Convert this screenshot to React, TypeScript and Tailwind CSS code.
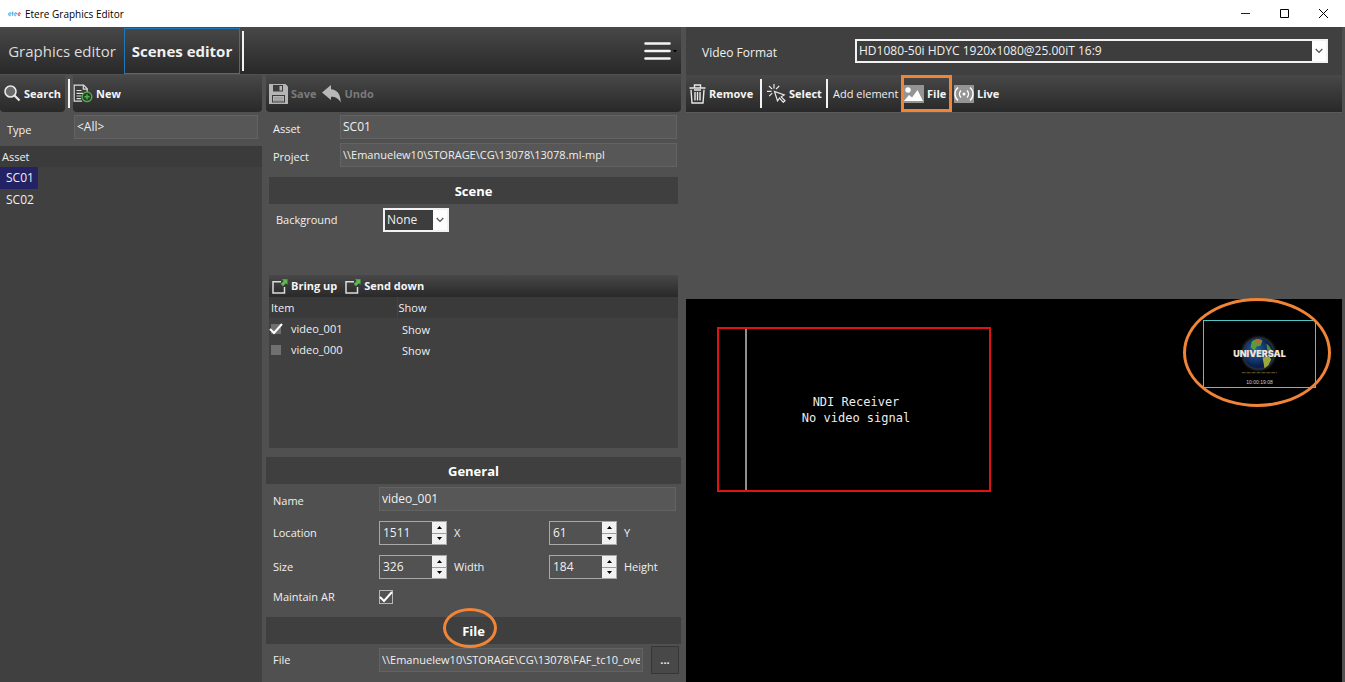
import { useState } from 'react'
import type { ReactNode } from 'react'
import clsx from 'clsx'

const TOOLBAR = 'bg-linear-to-b from-[#484848] to-[#292929]'
const FIELD =
  'h-6 min-w-0 border border-[#636363] bg-[#575757] px-0.5 pb-0.5 text-[#f0f0f0] outline-none'

function Divider() {
  return <div className="mx-[3px] h-[29px] w-0.5 shrink-0 bg-[#f2f2f2]" />
}

function Chevron() {
  return (
    <svg width="8" height="6" viewBox="0 0 8 6" fill="none" stroke="#555" strokeWidth="1.3">
      <path d="M0.7 1 4 4.4 7.3 1" />
    </svg>
  )
}

function ToolButton({
  icon,
  label,
  disabled,
  className
}: {
  icon: ReactNode
  label: string
  disabled?: boolean
  className?: string
}) {
  return (
    <button
      type="button"
      disabled={disabled}
      className={clsx(
        'flex h-full shrink-0 items-center gap-[3px] font-bold whitespace-nowrap',
        disabled ? 'text-[#7b7b7b]' : 'text-[#f4f4f4]',
        className
      )}
    >
      {icon}
      {label}
    </button>
  )
}

function SelectBox({ id, options, className }: { id: string; options: string[]; className: string }) {
  return (
    <div className={clsx('flex h-6 border-2 border-[#f2f2f2] bg-[#3d3d3d]', className)}>
      <div className="relative flex flex-1">
        <select
          id={id}
          className="w-full appearance-none bg-transparent pr-4 pl-0.5 text-xs leading-4 text-[#f0f0f0] outline-none"
        >
          {options.map((option) => (
            <option key={option}>{option}</option>
          ))}
        </select>
        <span className="pointer-events-none absolute inset-y-0 right-0 flex w-[14px] items-center justify-center bg-white">
          <Chevron />
        </span>
      </div>
    </div>
  )
}

function SectionTitle({ children, className }: { children: ReactNode; className?: string }) {
  return (
    <h2
      className={clsx(
        'flex h-[27px] items-center justify-center bg-[#3f3f3f] text-[13px] font-bold text-white',
        className
      )}
    >
      {children}
    </h2>
  )
}

function NumberField({ id, label, initial }: { id: string; label: string; initial: number }) {
  const [value, setValue] = useState(initial)
  return (
    <div className="flex items-center gap-[7px]">
      <div className="flex h-6 w-[68px] shrink-0 border border-[#a8a8a8] bg-[#525252]">
        <input
          id={id}
          type="number"
          value={value}
          onChange={(e) => setValue(+e.target.value)}
          className="min-w-0 flex-1 appearance-none bg-transparent pl-[3px] text-xs text-[#f0f0f0] outline-none [appearance:textfield] [&::-webkit-inner-spin-button]:appearance-none"
        />
        <div className="flex w-[14px] flex-col gap-px bg-[#9a9a9a]">
          <button
            type="button"
            aria-label={`Increase ${label}`}
            onClick={() => setValue(value + 1)}
            className="flex flex-1 items-center justify-center bg-[#f1f1f1]"
          >
            <svg width="5" height="3" viewBox="0 0 5 3">
              <path d="M0 3 2.5 0 5 3z" />
            </svg>
          </button>
          <button
            type="button"
            aria-label={`Decrease ${label}`}
            onClick={() => setValue(value - 1)}
            className="flex flex-1 items-center justify-center bg-[#f1f1f1]"
          >
            <svg width="5" height="3" viewBox="0 0 5 3">
              <path d="M0 0h5L2.5 3z" />
            </svg>
          </button>
        </div>
      </div>
      <label htmlFor={id}>{label}</label>
    </div>
  )
}

function CheckBox({ id, initial, bordered }: { id: string; initial: boolean; bordered?: boolean }) {
  const [checked, setChecked] = useState(initial)
  return (
    <span className="relative block size-3.5">
      <input
        id={id}
        type="checkbox"
        checked={checked}
        onChange={() => setChecked(!checked)}
        className={clsx(
          'block size-full appearance-none',
          bordered ? 'border border-[#b5b5b5] bg-[#525252]' : 'border-2 border-[#404040] bg-[#707070]'
        )}
      />
      {checked && (
        <svg
          className="pointer-events-none absolute inset-0"
          width="14"
          height="14"
          viewBox="0 0 14 14"
          fill="none"
          stroke="#fff"
          strokeWidth="2"
        >
          <path d="M1 7 5 11 13 2" />
        </svg>
      )}
    </span>
  )
}

function SearchIcon() {
  return (
    <svg width="17" height="17" viewBox="0 0 17 17" fill="none" stroke="#e8e8e8">
      <circle cx="6.5" cy="6.5" r="5.5" fill="#6a6a6a" strokeWidth="1.6" />
      <path d="m10.5 10.5 5 5" strokeWidth="2.2" />
    </svg>
  )
}

function NewIcon() {
  return (
    <svg width="20" height="19" viewBox="0 0 20 19" fill="none" stroke="#dedede" strokeWidth="1.2">
      <path d="M9 17.2H1.2V1.2h9.5l3.5 3.6V8" />
      <path d="M10.3 1.2v4h4M3.5 6.5h5M3.5 9.3h7M3.5 12h5M3.5 14.7h4.5" />
      <circle cx="14" cy="12.8" r="4.8" fill="#303a30" stroke="#4fae4b" strokeWidth="1.4" />
      <path d="M14 10.2v5.2M11.4 12.8h5.2" stroke="#4fae4b" strokeWidth="1.4" />
    </svg>
  )
}

function SaveIcon() {
  return (
    <svg width="19" height="20" viewBox="0 0 19 20">
      <path d="M0 0h16.5L19 2.5V20H0z" fill="#b5b5b5" />
      <path d="M4 1h10v6.5H4zM3 11h13v7.5H3z" fill="#3c3c3c" />
      <path d="M10.5 2H13v4.5h-2.5zM4 12h11v5.5H4z" fill="#b5b5b5" />
      <path d="M5 13.5h9v1H5zM5 15.7h9v1H5z" fill="#8a8a8a" />
    </svg>
  )
}

function UndoIcon() {
  return (
    <svg width="19" height="18" viewBox="0 0 19 18" fill="#b8b8b8">
      <path d="M0 7.5 9 0v4.3c5.500.3 9.500 4 9.800 13.200-2.300-4-5-5.600-9.800-5.700V15z" />
    </svg>
  )
}

function MoveIcon() {
  return (
    <svg width="16" height="15" viewBox="0 0 16 15" fill="none">
      <path d="M9 2.7H1V14h11.5V8" stroke="#dcdcdc" strokeWidth="1.5" />
      <path d="M15.500.2v5.600L13.900 4.300 11 7.200 8.800 5 11.700 2.100 10 .2z" fill="#5bb94f" />
    </svg>
  )
}

function TrashIcon() {
  return (
    <svg width="17" height="20" viewBox="0 0 17 20" fill="none" stroke="#e8e8e8" strokeWidth="1.4">
      <path d="M.5 4h16M5.500 3.800V1h6v2.800M2 5.800 3 19h11l1-13.200M5 6h7" />
      <path d="M6 8v8.500M8.500 8v8.500M11 8v8.500" />
    </svg>
  )
}

function SelectIcon() {
  return (
    <svg width="19" height="19" viewBox="0 0 19 19" fill="none" stroke="#e8e8e8" strokeWidth="1.2">
      <path d="M7 0v4.500M2 2l3.200 3.200M0 7.300h4.500M2.200 12.200l3-3M12.200 2 9 5.200" />
      <path d="m7.500 7.500 3 9.500 2-3 3.800 4.300 1.700-1.500-3.800-4 3-1.900z" />
    </svg>
  )
}

function ImageIcon() {
  return (
    <svg width="20" height="18" viewBox="0 0 20 18">
      <path fill="#949494" d="M0 0h20v18H0z" />
      <circle cx="4" cy="5" r="2.7" fill="#fff" />
      <path d="M0 16 5 10l3 2.500L13.500 5 19 16z" fill="#fff" />
    </svg>
  )
}

function LiveIcon() {
  return (
    <svg width="20" height="18" viewBox="0 0 20 18" fill="none" stroke="#fff" strokeWidth="1.4">
      <path fill="#949494" stroke="none" d="M0 0h20v18H0z" />
      <circle cx="10" cy="9" r="1.5" fill="#fff" stroke="none" />
      <path d="M7 5.500a5 5 0 0 0 0 7M13 5.500a5 5 0 0 1 0 7M4 2.500a8.500 8.500 0 0 0 0 13M16 2.500a8.500 8.500 0 0 1 0 13" />
    </svg>
  )
}

function TitleBar() {
  return (
    <header className="flex h-[27px] shrink-0 items-center bg-white pr-0.5 pl-2 text-[10px] text-black">
      <svg className="mr-1" width="13" height="6" viewBox="0 0 13 6" fill="none" strokeWidth="1">
        <path
          d="M.6 3h2.600a1.300 1.600 0 1 0-.4 1.400M4.600.5v4.300M3.800 2h1.800M6.600 3h2a1.200 1.600 0 1 0-.4 1.400"
          stroke="#53aee8"
        />
        <path d="M10 3h2.400a1.200 1.600 0 1 0-.4 1.400" stroke="#e8505b" />
      </svg>
      <h1 className="flex-1">Etere Graphics Editor</h1>
      <div className="flex h-full">
        <button type="button" aria-label="Minimize" className="flex w-[39px] items-center justify-center">
          <svg width="9" height="9" viewBox="0 0 9 9" stroke="#222">
            <path d="M0 4.500h9" />
          </svg>
        </button>
        <button type="button" aria-label="Maximize" className="flex w-[39px] items-center justify-center">
          <svg width="9" height="9" viewBox="0 0 9 9" fill="none" stroke="#000">
            <path d="M.5.5h8v8h-8z" />
          </svg>
        </button>
        <button type="button" aria-label="Close" className="flex w-[39px] items-center justify-center">
          <svg width="9" height="9" viewBox="0 0 9 9" stroke="#000">
            <path d="m0 0 9 9M9 0 0 9" />
          </svg>
        </button>
      </div>
    </header>
  )
}

function AssetList() {
  const [selected, setSelected] = useState('SC01')
  return (
    <aside className="flex w-[262px] shrink-0 flex-col">
      <div className="flex h-[37px]">
        <div className={clsx('flex w-[65px] rounded-b-sm', TOOLBAR)}>
          <ToolButton icon={<SearchIcon />} label="Search" className="pl-1" />
        </div>
        <div className="flex items-center">
          <Divider />
        </div>
        <div className={clsx('flex flex-1 rounded-b-sm', TOOLBAR)}>
          <ToolButton icon={<NewIcon />} label="New" />
        </div>
      </div>
      <div className="flex h-[34px] items-start pt-[3px] pr-1 pl-[7px]">
        <label htmlFor="type" className="w-[67px] pt-[7px]">
          Type
        </label>
        <input id="type" className={clsx('flex-1 text-xs', FIELD)} defaultValue="<All>" />
      </div>
      <div className="flex-1 bg-[#404040]">
        <div className="flex h-[21px] items-center bg-[#3b3b3b] pl-0.5">Asset</div>
        {['SC01', 'SC02'].map((asset) => (
          <button
            key={asset}
            type="button"
            onClick={() => setSelected(asset)}
            className={clsx(
              'flex h-[22px] w-[38px] items-center pl-[6px] text-xs',
              selected === asset && 'bg-[#232264]'
            )}
          >
            {asset}
          </button>
        ))}
      </div>
    </aside>
  )
}

const ITEMS = [
  { name: 'video_001', checked: true },
  { name: 'video_000', checked: false }
]

function SceneDetails() {
  return (
    <section className="flex min-w-0 flex-1 flex-col">
      <div className={clsx('flex h-[37px] shrink-0 gap-1.5 rounded-b-sm pl-[3px]', TOOLBAR)}>
        <ToolButton icon={<SaveIcon />} label="Save" disabled />
        <ToolButton icon={<UndoIcon />} label="Undo" disabled />
      </div>
      <div className="mt-[3px] flex flex-col gap-1 pr-1 pl-[7px]">
        <div className="flex items-center">
          <label htmlFor="asset" className="w-[67px] pt-1">
            Asset
          </label>
          <input id="asset" className={clsx('flex-1 text-xs', FIELD)} defaultValue="SC01" />
        </div>
        <div className="flex items-center">
          <label htmlFor="project" className="w-[67px] pt-1">
            Project
          </label>
          <input
            id="project"
            className={clsx('flex-1', FIELD)}
            defaultValue={'\\\\Emanuelew10\\STORAGE\\CG\\13078\\13078.ml-mpl'}
          />
        </div>
      </div>

      <div className="mt-[10px] mr-[3px] ml-[3px]">
        <SectionTitle>Scene</SectionTitle>
        <div className="mt-1 flex items-center pl-[7px]">
          <label htmlFor="background" className="w-[107px]">
            Background
          </label>
          <SelectBox id="background" options={['None']} className="w-[66px]" />
        </div>
        <div className={clsx('mt-[43px] flex h-[22px] gap-2 pl-[3px]', TOOLBAR)}>
          <ToolButton icon={<MoveIcon />} label="Bring up" />
          <ToolButton icon={<MoveIcon />} label="Send down" />
        </div>
        <div className="h-[151px] bg-[#404040]">
          <table className="w-full table-fixed text-left">
            <thead className="bg-[#3a3a3a]">
              <tr className="h-[21px]">
                <th className="w-[128px] pl-0.5 font-normal">Item</th>
                <th className="border-l border-[#444] pl-px font-normal">Show</th>
              </tr>
            </thead>
            <tbody>
              {ITEMS.map((item) => (
                <tr key={item.name} className="h-[21px]">
                  <td>
                    <div className="flex items-center gap-2">
                      <CheckBox id={item.name} initial={item.checked} />
                      <label htmlFor={item.name}>{item.name}</label>
                    </div>
                  </td>
                  <td className="pt-0.5 pl-[5px]">Show</td>
                </tr>
              ))}
            </tbody>
          </table>
        </div>
      </div>

      <SectionTitle className="mt-[9px]">General</SectionTitle>
      <div className="mt-[3px] flex flex-col gap-[10px] pr-[5px] pl-[7px]">
        <div className="flex items-center">
          <label htmlFor="name" className="w-[106px] pt-1">
            Name
          </label>
          <input id="name" className={clsx('flex-1 text-xs', FIELD)} defaultValue="video_001" />
        </div>
        <div className="grid grid-cols-[106px_170px_auto] items-center">
          <span>Location</span>
          <NumberField id="location-x" label="X" initial={1511} />
          <NumberField id="location-y" label="Y" initial={61} />
        </div>
        <div className="grid grid-cols-[106px_170px_auto] items-center">
          <span>Size</span>
          <NumberField id="size-width" label="Width" initial={326} />
          <NumberField id="size-height" label="Height" initial={184} />
        </div>
        <div className="flex items-center">
          <label htmlFor="maintain-ar" className="w-[106px]">
            Maintain AR
          </label>
          <CheckBox id="maintain-ar" initial bordered />
        </div>
      </div>

      <SectionTitle className="mt-3">
        <span className="relative">
          File
          <span className="pointer-events-none absolute -top-[15px] -left-[19px] h-10 w-[54px] rounded-[50%] border-3 border-[#f08437]" />
        </span>
      </SectionTitle>
      <div className="mt-0.5 flex items-center pr-0.5 pl-[7px]">
        <label htmlFor="file" className="w-[106px]">
          File
        </label>
        <input
          id="file"
          className={clsx('mr-2 flex-1', FIELD)}
          defaultValue={'\\\\Emanuelew10\\STORAGE\\CG\\13078\\FAF_tc10_overlay.mov'}
        />
        <button
          type="button"
          aria-label="Browse file"
          className="h-7 w-7 shrink-0 border border-[#363636] bg-[#484848] font-bold"
        >
          ...
        </button>
      </div>
    </section>
  )
}

function Globe() {
  return (
    <svg className="absolute inset-0 size-full" viewBox="0 0 112 67">
      <defs>
        <radialGradient id="halo">
          <stop offset="70%" stopColor="#8a8fa0" stopOpacity="0.7" />
          <stop offset="100%" stopColor="#000" stopOpacity="0" />
        </radialGradient>
        <radialGradient id="ocean" cx="40%" cy="40%">
          <stop offset="0%" stopColor="#2566ab" />
          <stop offset="100%" stopColor="#0a1f4c" />
        </radialGradient>
      </defs>
      <circle cx="55" cy="33" r="20" fill="url(#halo)" />
      <circle cx="55" cy="33" r="15.5" fill="url(#ocean)" />
      <path d="M48 21c3-3 9-3 11-1l-2 5-4 1-2 4-4-3z" fill="#5c9a3c" />
      <path d="M52 19c2-1 5 0 6 2l-4 3z" fill="#c2652e" />
      <path d="m59 37 7-1 2 3-3 6-4 3-1-6z" fill="#9aa83a" />
      <path d="M63 23c2 1 5 5 6 8l-5-1z" fill="#4f8b3e" />
      <path d="M38 52.500h36" stroke="#6b5a2c" strokeDasharray="4 1" />
    </svg>
  )
}

function Canvas() {
  return (
    <div className="relative flex-1 bg-black">
      <div className="absolute top-[28px] left-[31px] flex h-[165px] w-[274px] items-center justify-center border-2 border-[#e01212]">
        <div className="absolute inset-y-0 left-[26px] w-0.5 bg-[#8f8f8f]" />
        <p className="pl-1 text-center font-['DejaVu_Sans_Mono',monospace] text-xs leading-4 text-[#ececec]">
          NDI Receiver
          <br />
          No video signal
        </p>
      </div>
      <div className="absolute top-[21px] left-[517px] h-[68px] w-[113px] border border-[#4fc7c9]">
        <Globe />
        <span className="absolute inset-x-0 top-[25px] text-center font-['Inter',sans-serif] text-[9px] leading-4 font-black text-[#f1e4d2]">
          UNIVERSAL
        </span>
        <span className="absolute inset-x-0 top-[57px] text-center font-['Liberation_Sans',sans-serif] text-[5px] leading-2 text-[#d0d0d0]">
          10:00:19:08
        </span>
      </div>
      <div className="pointer-events-none absolute -top-px left-[497px] h-[109px] w-[148px] rounded-[50%] border-3 border-[#f08437]" />
    </div>
  )
}

function Preview() {
  return (
    <section className="mr-[3px] flex min-w-0 flex-1 flex-col">
      <div className="flex h-12 shrink-0 items-center bg-[#404040] pr-[14px] pl-4">
        <label htmlFor="video-format" className="w-[153px] shrink-0 pt-[3px] text-xs">
          Video Format
        </label>
        <SelectBox
          id="video-format"
          options={['HD1080-50i HDYC 1920x1080@25.00iT 16:9']}
          className="flex-1"
        />
      </div>
      <div className={clsx('flex h-[37px] shrink-0 items-center', TOOLBAR)}>
        <ToolButton icon={<TrashIcon />} label="Remove" className="w-[71px] pl-[3px]" />
        <Divider />
        <ToolButton icon={<SelectIcon />} label="Select" className="w-[58px] pl-0.5" />
        <Divider />
        <span className="w-[70px] shrink-0 pl-0.5">Add element</span>
        <ToolButton
          icon={<ImageIcon />}
          label="File"
          className="w-[51px] border-3 border-[#f08437]"
        />
        <ToolButton icon={<LiveIcon />} label="Live" className="ml-0.5" />
      </div>
      <div className="h-[187px] shrink-0 border-t border-[#5c5c5c]" />
      <Canvas />
    </section>
  )
}

export default function App() {
  return (
    <div className="flex min-h-screen flex-col bg-[#505050] font-['Open_Sans','Noto_Sans',sans-serif] text-[11px] leading-4 text-[#f0f0f0]">
      <TitleBar />
      <main className="flex flex-1">
        <div className="mr-[5px] flex w-[681px] shrink-0 flex-col">
          <nav
            className={clsx('mb-px flex h-[47px] shrink-0 items-center text-[15px] leading-6', TOOLBAR)}
          >
            <button type="button" className="h-full w-[124px] whitespace-nowrap text-[#dcdcdc]">
              Graphics editor
            </button>
            <button
              type="button"
              className="h-[46px] w-[116px] border border-[#1f78b8] font-bold whitespace-nowrap"
            >
              Scenes editor
            </button>
            <div className="ml-0.5 h-10 w-0.5 bg-[#f2f2f2]" />
            <button type="button" aria-label="Menu" className="ml-auto flex items-center pr-1">
              <svg width="33" height="18" viewBox="0 0 33 18">
                <path
                  d="M1.500 1.500h24M1.500 9h24M1.500 16.500h24"
                  stroke="#f4f4f4"
                  strokeWidth="2.6"
                  strokeLinecap="round"
                />
                <path d="M29 8h4l-2 2.500z" fill="#000" />
              </svg>
            </button>
          </nav>
          <div className="flex flex-1 gap-1">
            <AssetList />
            <SceneDetails />
          </div>
        </div>
        <Preview />
      </main>
    </div>
  )
}
